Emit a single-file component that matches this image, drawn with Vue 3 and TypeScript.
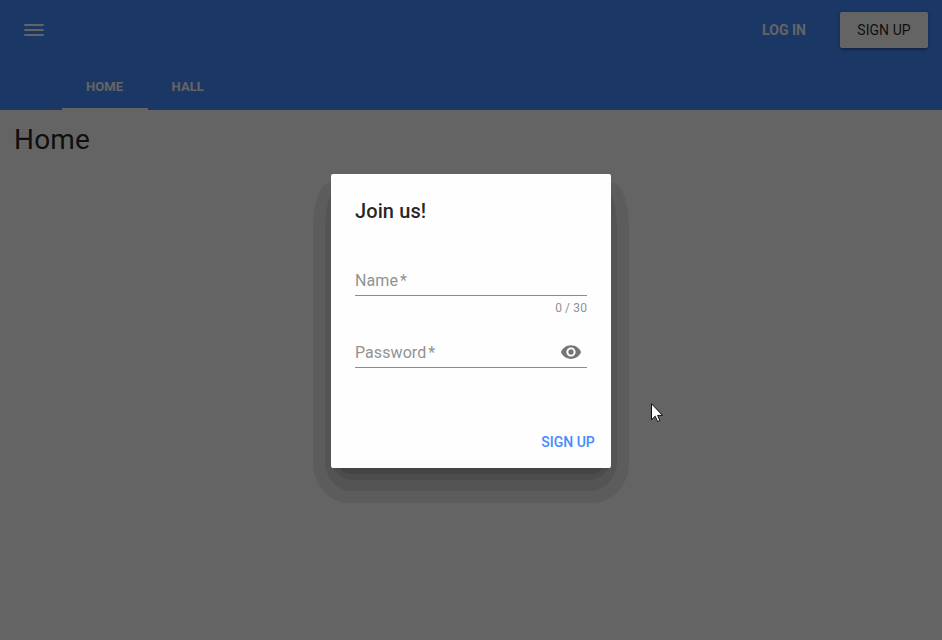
<script setup lang="ts">
import { ref } from 'vue'

interface Tab {
  id: string
  label: string
}

const tabs: Tab[] = [
  { id: 'home', label: 'HOME' },
  { id: 'hall', label: 'HALL' },
]
const activeTab = ref('home')
const maxNameLength = 30
const name = ref('')
</script>

<template>
  <div class="app">
    <header class="toolbar">
      <div class="toolbar-row">
        <button class="menu-button" aria-label="Menu">
          <svg viewBox="0 0 24 24" width="24" height="24">
            <path d="M2.3 6h19.4v2H2.3zM2.3 11h19.4v2H2.3zM2.3 16h19.4v2H2.3z" />
          </svg>
        </button>
        <div class="actions">
          <button class="btn login">LOG IN</button>
          <button class="btn signup">SIGN UP</button>
        </div>
      </div>
      <nav class="tabs">
        <button
          v-for="tab in tabs"
          :key="tab.id"
          class="tab"
          :class="{ active: tab.id === activeTab }"
          @click="activeTab = tab.id"
        >
          {{ tab.label }}
        </button>
      </nav>
    </header>
    <main class="content">
      <h1>Home</h1>
    </main>

    <div class="backdrop">
      <div class="dialog-wrap">
        <div class="shade shade-far"></div>
        <div class="shade shade-mid"></div>
        <div class="shade shade-near"></div>
        <div class="shade shade-close"></div>
        <section class="dialog" role="dialog">
          <h2>Join us!</h2>
          <div class="field">
            <span class="label">Name<span class="star">*</span></span>
          </div>
          <div class="counter">{{ name.length }} / {{ maxNameLength }}</div>
          <div class="field password">
            <span class="label">Password<span class="star">*</span></span>
            <svg class="eye" viewBox="0 0 24 24" width="22" height="22">
              <path
                d="M12 4.5C7 4.5 2.73 7.61 1 12c1.73 4.39 6 7.5 11 7.5s9.27-3.11 11-7.5c-1.73-4.39-6-7.5-11-7.5zM12 17c-2.76 0-5-2.24-5-5s2.24-5 5-5 5 2.24 5 5-2.24 5-5 5zm0-8c-1.66 0-3 1.34-3 3s1.34 3 3 3 3-1.34 3-3-1.34-3-3-3z"
              />
            </svg>
          </div>
          <div class="dialog-actions">
            <button class="btn submit">SIGN UP</button>
          </div>
        </section>
      </div>
    </div>

    <svg class="pointer" viewBox="0 0 12 20" width="12" height="20">
      <path d="M.5.7v16l3.7-3.5 2.4 5.3 2.3-1-2.3-5.1h4.9z" />
    </svg>
  </div>
</template>

<style>
body {
  margin: 0;
  overflow: hidden;
}
</style>

<style scoped>
.app {
  position: relative;
  height: 640px;
  background: #fafafa;
  font-family: Roboto, sans-serif;
  color: rgba(0, 0, 0, 0.87);
}
button {
  border: 0;
  padding: 0;
  background: none;
  font-family: inherit;
}
.toolbar {
  height: 110px;
  background: #448aff;
}
.toolbar-row {
  display: flex;
  align-items: center;
  justify-content: space-between;
  height: 60px;
  padding: 0 14px 0 22px;
}
.menu-button {
  width: 24px;
  height: 24px;
}
.menu-button svg {
  display: block;
  fill: #fafafa;
}
.actions {
  display: flex;
  gap: 12px;
}
.btn {
  width: 88px;
  height: 36px;
  border-radius: 2px;
  font-size: 14px;
  font-weight: 500;
}
.login {
  color: #fafafa;
  font-weight: 700;
}
.signup {
  background: #fafafa;
  color: rgba(0, 0, 0, 0.87);
  font-weight: 400;
  letter-spacing: 0.06px;
  box-shadow: 0 1px 5px rgba(0, 0, 0, 0.2), 0 2px 2px rgba(0, 0, 0, 0.14), 0 3px 1px -2px rgba(0, 0, 0, 0.12);
}
.tabs {
  display: flex;
  height: 50px;
  padding-left: 62px;
}
.tab {
  box-sizing: border-box;
  padding: 4px 23.5px 0;
  border-bottom: 2px solid transparent;
  color: #fafafa;
  font-size: 13px;
  font-weight: 700;
  letter-spacing: 0.1px;
}
.tab.active {
  width: 86px;
  padding-right: 24.5px;
  border-color: #fafafa;
}
.content {
  padding: 13px 14px;
}
h1 {
  margin: 0;
  font-size: 28px;
  line-height: 34px;
  font-weight: 400;
  letter-spacing: 0.2px;
}
.backdrop {
  position: absolute;
  inset: 0;
  display: flex;
  justify-content: center;
  align-items: flex-start;
  padding-top: 174px;
  box-sizing: border-box;
  background: rgba(0, 0, 0, 0.6);
}
.dialog-wrap {
  position: relative;
}
.shade {
  position: absolute;
}
.shade-far {
  inset: 9px -18px -35px;
  border-radius: 16px 16px 36px 36px / 46px 46px 40px 40px;
  background: #5c5c5c;
}
.shade-mid {
  inset: 14px -6px -23px;
  border-radius: 12px 12px 26px 26px / 44px 44px 30px 30px;
  background: #545454;
}
.shade-near {
  inset: 22px 0 -12px;
  border-radius: 22px;
  background: #4c4c4c;
}
.shade-close {
  inset: 30px 6px -6px;
  border-radius: 14px;
  background: #444;
}
.dialog {
  position: relative;
  box-sizing: border-box;
  width: 280px;
  height: 294px;
  padding: 24px 24px 0;
  border-radius: 2px;
  background: #fefefe;
}
h2 {
  margin: 0 0 44px;
  font-size: 20px;
  line-height: 26px;
  font-weight: 500;
  letter-spacing: 0.1px;
}
.field {
  display: flex;
  box-sizing: border-box;
  height: 28px;
  border-bottom: 1px solid #8c8c8c;
}
.label {
  font-size: 16px;
  line-height: 25px;
  letter-spacing: 0.08px;
  color: #929292;
}
.star {
  margin-left: 2px;
}
.counter {
  height: 44px;
  font-size: 12px;
  line-height: 24px;
  letter-spacing: 0.12px;
  text-align: right;
  color: #929292;
}
.password {
  justify-content: space-between;
  padding-right: 5px;
}
.eye {
  margin-top: 1px;
  fill: #757575;
}
.dialog-actions {
  display: flex;
  justify-content: flex-end;
  margin: 56px -16px 0 0;
}
.submit {
  width: 70px;
  color: #448aff;
}
.pointer {
  position: absolute;
  left: 651px;
  top: 403px;
  fill: #fff;
  stroke: #10101c;
  stroke-width: 1;
}
</style>
